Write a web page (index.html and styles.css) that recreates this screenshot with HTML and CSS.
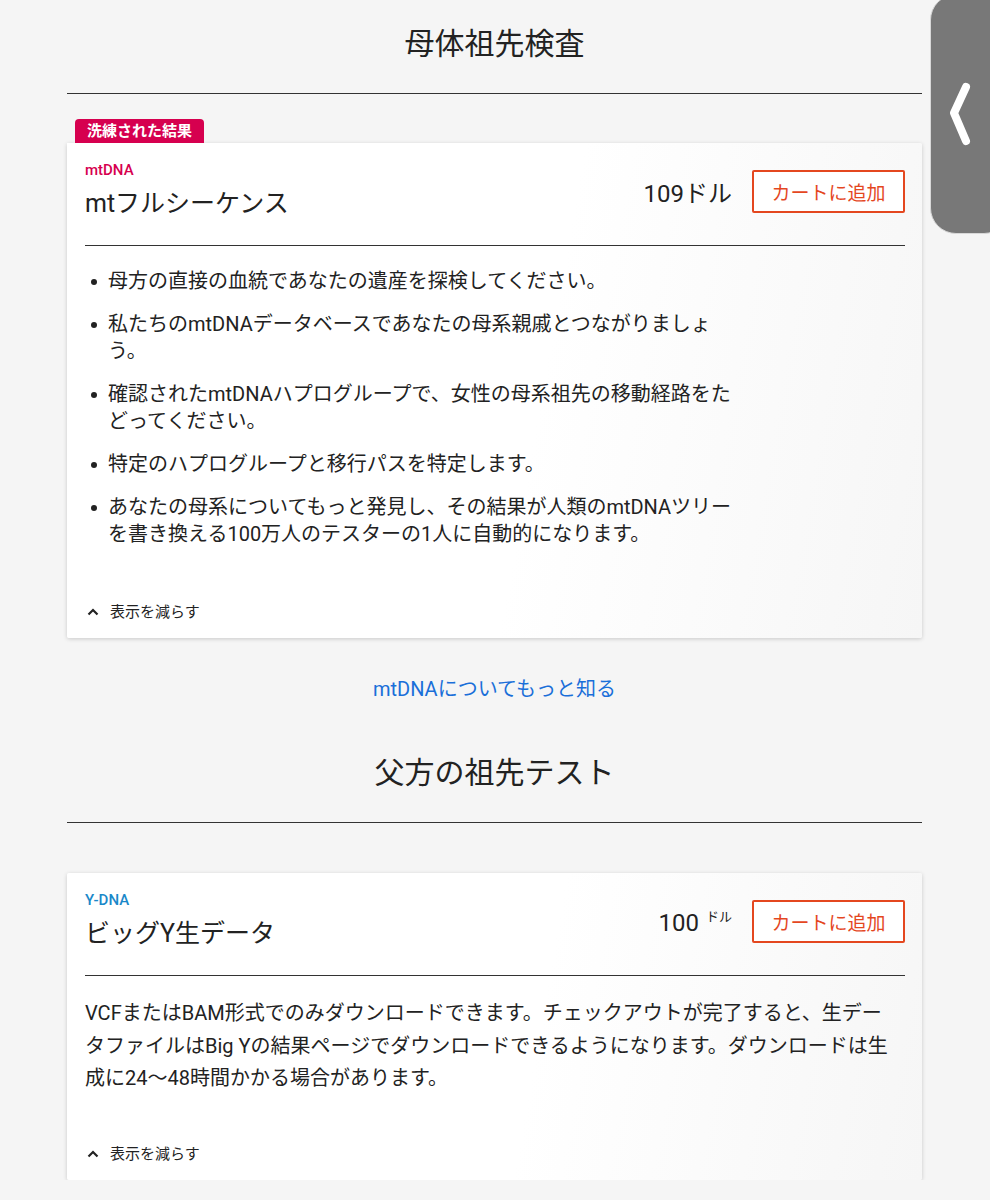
FILE: index.html
```html
<!DOCTYPE html>
<html lang="ja">
<head>
  <meta charset="UTF-8" />
  <meta name="viewport" content="width=device-width, initial-scale=1.0"/>
  <title>祖先テスト</title>
  <link rel="stylesheet" href="styles.css">
</head>
<body>
  <div class="page">
    <section class="section">
      <h2 class="section-title">母体祖先検査</h2>
      <hr class="rule">

      <div class="card-wrap">
        <span class="badge">洗練された結果</span>
        <div class="card card-flat-top">
          <div class="card-head">
            <div>
              <div class="kind kind-mt">mtDNA</div>
              <h3 class="product">mtフルシーケンス</h3>
            </div>
            <div class="buy">
              <span class="price">109ドル</span>
              <button class="add-btn">カートに追加</button>
            </div>
          </div>
          <hr class="rule">
          <ul class="points">
            <li>母方の直接の血統であなたの遺産を探検してください。</li>
            <li>私たちのmtDNAデータベースであなたの母系親戚とつながりましょう。</li>
            <li>確認されたmtDNAハプログループで、女性の母系祖先の移動経路をたどってください。</li>
            <li>特定のハプログループと移行パスを特定します。</li>
            <li>あなたの母系についてもっと発見し、その結果が人類のmtDNAツリーを書き換える100万人のテスターの1人に自動的になります。</li>
          </ul>
          <button class="toggle">
            <svg width="12" height="8" viewBox="0 0 12 8"><path d="M1.5 6.5 6 2l4.5 4.5" fill="none" stroke="#222" stroke-width="2.2"/></svg>
            表示を減らす
          </button>
        </div>
      </div>

      <a class="more-link" href="#">mtDNAについてもっと知る</a>
    </section>

    <section class="section section-second">
      <h2 class="section-title">父方の祖先テスト</h2>
      <hr class="rule">

      <div class="card-wrap card-wrap-plain">
        <div class="card">
          <div class="card-head">
            <div>
              <div class="kind kind-y">Y-DNA</div>
              <h3 class="product">ビッグY生データ</h3>
            </div>
            <div class="buy">
              <span class="price">100<sup>ドル</sup></span>
              <button class="add-btn">カートに追加</button>
            </div>
          </div>
          <hr class="rule">
          <p class="desc">VCFまたはBAM形式でのみダウンロードできます。チェックアウトが完了すると、生データファイルはBig Yの結果ページでダウンロードできるようになります。ダウンロードは生成に24〜48時間かかる場合があります。</p>
          <button class="toggle toggle-second">
            <svg width="12" height="8" viewBox="0 0 12 8"><path d="M1.5 6.5 6 2l4.5 4.5" fill="none" stroke="#222" stroke-width="2.2"/></svg>
            表示を減らす
          </button>
        </div>
      </div>
    </section>
  </div>

  <div class="side-tab">
    <svg width="24" height="66" viewBox="0 0 24 66"><path d="M17 5 5 31l12 28" fill="none" stroke="#fff" stroke-width="8" stroke-linecap="round" stroke-linejoin="round"/></svg>
  </div>
</body>
</html>
```

FILE: styles.css
```css
* {
  box-sizing: border-box;
  margin: 0;
  padding: 0;
}

body {
  font-family: Roboto, "Noto Sans CJK JP", sans-serif;
  color: #222;
  background: #f5f5f5;
  overflow: hidden;
}

.page {
  margin: 0 68px 0 67px;
}

.section-title {
  font-size: 30px;
  font-weight: 400;
  line-height: 42px;
  text-align: center;
  padding-top: 23px;
  margin-bottom: 28px;
}

.rule {
  border: none;
  border-top: 1px solid #333;
}

.card-wrap {
  margin-top: 25px;
}

.card-wrap-plain {
  margin-top: 50px;
}

.badge {
  display: inline-block;
  margin-left: 8px;
  height: 24px;
  line-height: 24px;
  padding: 0 12px;
  background: #d6004f;
  color: #fff;
  font-size: 15px;
  font-weight: 700;
  border-radius: 4px 4px 0 0;
}

.card {
  background: linear-gradient(100deg, #fff 55%, #f6f6f6 100%);
  box-shadow: 0 1px 4px rgba(0, 0, 0, 0.18);
  padding: 17px 17px 16px 18px;
  border-radius: 2px;
}

.card-flat-top {
  border-top-left-radius: 0;
}

.card-head {
  display: flex;
  justify-content: space-between;
  align-items: center;
  margin-bottom: 23px;
}

.kind {
  font-size: 15px;
  line-height: 20px;
  font-weight: 500;
}

.kind-mt {
  color: #d6004f;
}

.kind-y {
  color: #1a88c9;
}

.product {
  font-size: 25px;
  font-weight: 400;
  line-height: 36px;
  margin-top: 6px;
}

.buy {
  display: flex;
  align-items: center;
  gap: 20px;
}

.price {
  font-size: 24px;
  font-weight: 400;
}

.price sup {
  font-size: 13px;
  font-weight: 400;
  margin-left: 7px;
  vertical-align: 10px;
}

.add-btn {
  width: 153px;
  height: 43px;
  background: #fff;
  border: 2px solid #e4471f;
  border-radius: 2px;
  color: #e4471f;
  font-family: inherit;
  font-size: 19px;
  cursor: pointer;
}

.points {
  list-style: none;
  max-width: 655px;
  margin-top: 22px;
}

.points li {
  position: relative;
  padding-left: 23px;
  font-size: 20px;
  line-height: 27px;
  margin-bottom: 16px;
}

.points li:last-child {
  margin-bottom: 0;
}

.points li::before {
  content: '';
  position: absolute;
  left: 6px;
  top: 11px;
  width: 6px;
  height: 6px;
  border-radius: 50%;
  background: #222;
}

.toggle {
  display: flex;
  align-items: center;
  gap: 11px;
  margin-top: 54px;
  padding-left: 2px;
  background: none;
  border: none;
  font-family: inherit;
  font-size: 15px;
  line-height: 20px;
  color: #222;
}

.toggle-second {
  margin-top: 49px;
}

.desc {
  max-width: 806px;
  font-size: 20px;
  line-height: 32.5px;
  margin-top: 21px;
}

.more-link {
  display: block;
  text-align: center;
  margin-top: 38px;
  font-size: 20px;
  line-height: 26px;
  color: #1a6fd9;
  text-decoration: none;
}

.section-second .section-title {
  padding-top: 50px;
}

.side-tab {
  position: absolute;
  top: -6px;
  right: -20px;
  width: 80px;
  height: 240px;
  background: #787878;
  border: 1px solid #d8d8d8;
  border-radius: 26px;
  padding: 87px 0 0 18px;
}
```
